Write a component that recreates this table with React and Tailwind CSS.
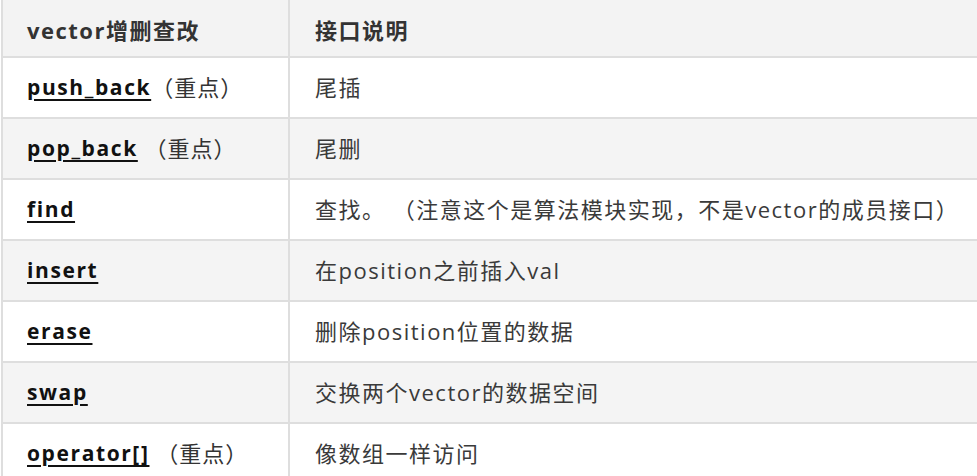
const rows = [
  { name: 'push_back', note: '（重点）', desc: '尾插' },
  { name: 'pop_back', note: ' （重点）', desc: '尾删' },
  { name: 'find', note: '', desc: '查找。 （注意这个是算法模块实现，不是vector的成员接口）' },
  { name: 'insert', note: '', desc: '在position之前插入val' },
  { name: 'erase', note: '', desc: '删除position位置的数据' },
  { name: 'swap', note: '', desc: '交换两个vector的数据空间' },
  { name: 'operator[]', note: ' （重点）', desc: '像数组一样访问' },
]

const font = { fontFamily: '"Open Sans", "Noto Sans CJK SC", sans-serif' }

export default function App() {
  return (
    <div className="w-[977px] h-[476px] overflow-hidden bg-white pl-px" style={font}>
      <div className="w-[1100px] border-l-2 border-[#dedede]">
        <div className="flex h-[58px] bg-[#f3f3f3] border-b-2 border-[#dedede]">
          <div className="w-[287px] shrink-0 border-r-2 border-[#dedede] flex items-center pl-6 pt-1 text-[22px] font-bold tracking-[1.5px] text-[#333]">
            vector增删查改
          </div>
          <div className="flex items-center pl-[25px] pt-1 text-[22px] font-bold tracking-[1.5px] text-[#333]">
            接口说明
          </div>
        </div>
        {rows.map((r, i) => (
          <div
            key={r.name}
            className={`flex h-[61px] border-b-2 border-[#dedede] ${i % 2 === 1 ? 'bg-[#f4f4f4]' : 'bg-white'}`}
          >
            <div className="w-[287px] shrink-0 border-r-2 border-[#dedede] flex items-center pl-6 whitespace-pre">
              <span className="text-[21px] font-bold tracking-[1.6px] text-[#111] underline decoration-2 underline-offset-[4px]">
                {r.name}
              </span>
              <span className="text-[22px] tracking-[1px] text-[#333]">{r.note}</span>
            </div>
            <div className="flex items-center pl-[25px] text-[22px] tracking-[1.5px] text-[#3a3a3a] whitespace-pre">
              {r.desc}
            </div>
          </div>
        ))}
      </div>
    </div>
  )
}
